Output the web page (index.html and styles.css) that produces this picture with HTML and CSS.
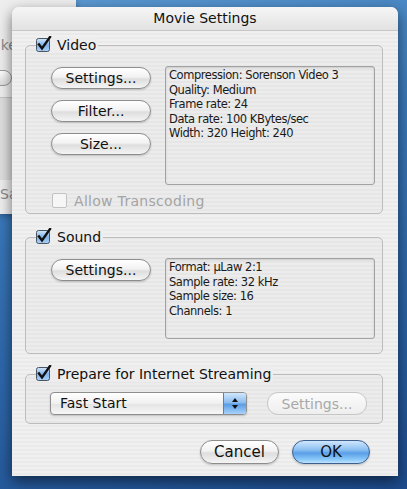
FILE: index.html
```html
<!DOCTYPE html>
<html lang="en">
<head>
  <meta charset="UTF-8" />
  <title>Movie Settings</title>
  <link rel="stylesheet" href="styles.css">
</head>
<body>
  <div class="desktop">

    <!-- window behind the sheet -->
    <div class="back-window">
      <div class="back-text back-make">Make</div>
      <div class="back-btn"></div>
      <div class="back-panel"></div>
      <div class="back-text back-save">Save</div>
    </div>

    <!-- Movie Settings dialog -->
    <div class="dialog">
      <div class="titlebar">Movie Settings</div>

      <div class="dialog-body">

        <div class="group group-video">
          <div class="group-title">
            <svg class="check" width="16" height="16" viewBox="0 0 16 16">
              <defs>
                <linearGradient id="cb1" x1="0" y1="0" x2="0" y2="1">
                  <stop offset="0" stop-color="#d4e8fb"/>
                  <stop offset="0.5" stop-color="#7fb3ea"/>
                  <stop offset="1" stop-color="#a9d0f6"/>
                </linearGradient>
              </defs>
              <rect x="0.5" y="2.5" width="13" height="13" rx="2" fill="url(#cb1)" stroke="#4a5563"/>
              <path d="M3 8.5 L6 12.5 L14 1" fill="none" stroke="#111" stroke-width="2.4" stroke-linecap="square"/>
            </svg>
            <span>Video</span>
          </div>
          <div class="group-row">
            <div class="btn-col">
              <button class="aqua-btn">Settings...</button>
              <button class="aqua-btn">Filter...</button>
              <button class="aqua-btn">Size...</button>
            </div>
            <div class="info info-video">
              <div>Compression: Sorenson Video 3</div>
              <div>Quality: Medium</div>
              <div>Frame rate: 24</div>
              <div>Data rate: 100 KBytes/sec</div>
              <div>Width: 320 Height: 240</div>
            </div>
          </div>
          <div class="check-row is-disabled">
            <span class="empty-box"></span>
            <span>Allow Transcoding</span>
          </div>
        </div>

        <div class="group group-sound">
          <div class="group-title">
            <svg class="check" width="16" height="16" viewBox="0 0 16 16">
              <rect x="0.5" y="2.5" width="13" height="13" rx="2" fill="url(#cb1)" stroke="#4a5563"/>
              <path d="M3 8.5 L6 12.5 L14 1" fill="none" stroke="#111" stroke-width="2.4" stroke-linecap="square"/>
            </svg>
            <span>Sound</span>
          </div>
          <div class="group-row">
            <div class="btn-col">
              <button class="aqua-btn">Settings...</button>
            </div>
            <div class="info info-sound">
              <div>Format: µLaw 2:1</div>
              <div>Sample rate: 32 kHz</div>
              <div>Sample size: 16</div>
              <div>Channels: 1</div>
            </div>
          </div>
        </div>

        <div class="group group-stream">
          <div class="group-title">
            <svg class="check" width="16" height="16" viewBox="0 0 16 16">
              <rect x="0.5" y="2.5" width="13" height="13" rx="2" fill="url(#cb1)" stroke="#4a5563"/>
              <path d="M3 8.5 L6 12.5 L14 1" fill="none" stroke="#111" stroke-width="2.4" stroke-linecap="square"/>
            </svg>
            <span>Prepare for Internet Streaming</span>
          </div>
          <div class="stream-row">
            <div class="popup">
              <span class="popup-label">Fast Start</span>
              <span class="popup-arrows">
                <svg width="8" height="13" viewBox="0 0 8 13">
                  <path d="M4 1 L7 5 L1 5 Z" fill="#111"/>
                  <path d="M4 12 L7 8 L1 8 Z" fill="#111"/>
                </svg>
              </span>
            </div>
            <button class="aqua-btn btn-disabled">Settings...</button>
          </div>
        </div>

        <div class="footer">
          <button class="aqua-btn btn-cancel">Cancel</button>
          <button class="aqua-btn btn-ok">OK</button>
        </div>

      </div>
    </div>

  </div>
</body>
</html>
```

FILE: styles.css
```css
body {
  margin: 0;
  padding: 0;
  font-family: 'DejaVu Sans', sans-serif;
  overflow: hidden;
}

.desktop {
  position: relative;
  width: 407px;
  height: 489px;
  overflow: hidden;
  background: linear-gradient(165deg, #5d9bd2 0%, #3a78b9 35%, #2a62a4 70%, #1d4b8c 100%);
}

/* Window behind the sheet */
.back-window {
  position: absolute;
  left: 0;
  top: 0;
  width: 76px;
  height: 214px;
  background: #eeeeee;
  display: flex;
  flex-direction: column;
  box-shadow: 0 2px 6px rgba(0,0,0,0.3);
}

.back-text {
  font-size: 14px;
  color: #8a8a8a;
}

.back-make {
  margin-top: 37px;
  margin-left: -20px;
}

.back-btn {
  margin-top: 17px;
  margin-left: -30px;
  width: 40px;
  height: 14px;
  border: 1px solid #9a9a9a;
  border-radius: 8px;
  background: linear-gradient(#ffffff, #dcdcdc);
}

.back-panel {
  margin-top: 11px;
  height: 82px;
  background: #dedede;
  border-top: 1px solid #c4c4c4;
}

.back-save {
  margin-top: 6px;
}

/* Dialog */
.dialog {
  position: absolute;
  left: 12px;
  top: 7px;
  width: 386px;
  height: 469px;
  border-radius: 7px 7px 0 0;
  background: repeating-linear-gradient(#f0f0f0 0, #f0f0f0 2px, #eaeaea 2px, #eaeaea 4px);
  box-shadow: 0 5px 14px rgba(0,0,0,0.55);
  overflow: hidden;
}

.titlebar {
  height: 23px;
  line-height: 23px;
  text-align: center;
  font-size: 14px;
  color: #111;
  background: linear-gradient(#f6f6f6, #e2e2e2);
  border-bottom: 1px solid #c6c6c6;
  border-radius: 7px 7px 0 0;
}

.dialog-body {
  padding: 14px 15px 0 13px;
  display: flex;
  flex-direction: column;
}

/* Group boxes */
.group {
  position: relative;
  border: 1px solid #bcbcbc;
  border-radius: 5px;
  background: rgba(0,0,0,0.015);
}

.group-title {
  position: absolute;
  left: 10px;
  top: -9px;
  display: flex;
  align-items: center;
  gap: 5px;
  padding-right: 2px;
  background: #ededed;
  font-size: 14px;
  color: #111;
  line-height: 16px;
}

.check {
  display: block;
  margin-top: -3px;
}

.group-video {
  padding: 20px 7px 5px 25px;
}

.group-sound {
  margin-top: 23px;
  padding: 20px 7px 14px 25px;
}

.group-stream {
  margin-top: 20px;
  padding: 17px 15px 8px 24px;
}

.group-row {
  display: flex;
  gap: 14px;
}

.btn-col {
  display: flex;
  flex-direction: column;
  gap: 11px;
  padding-top: 1px;
}

/* Aqua push buttons */
.aqua-btn {
  width: 100px;
  height: 22px;
  padding: 0;
  border: 1px solid #8d8d8d;
  border-radius: 11px;
  background: linear-gradient(#ffffff 0%, #f2f2f2 45%, #dedede 55%, #f4f4f4 100%);
  font-family: 'DejaVu Sans', sans-serif;
  font-size: 14px;
  color: #111;
  box-shadow: 0 1px 2px rgba(0,0,0,0.2);
}

.btn-disabled {
  height: 23px;
  border-color: #c6c6c6;
  color: #a9a9a9;
  background: linear-gradient(#fbfbfb, #eeeeee);
  box-shadow: none;
}

/* Info boxes */
.info {
  flex: 1;
  border: 1px solid #a2a2a2;
  border-radius: 3px;
  padding: 1px 3px;
  font-size: 11.5px;
  letter-spacing: -0.45px;
  line-height: 14.6px;
  color: #1a1a1a;
  box-shadow: inset 0 1px 2px rgba(0,0,0,0.15);
}

.info-video {
  height: 115px;
}

.info-sound {
  height: 77px;
}

/* Allow Transcoding */
.check-row {
  margin-top: 8px;
  display: flex;
  align-items: center;
  gap: 7px;
  font-size: 14px;
  letter-spacing: 0.3px;
  height: 15px;
}

.is-disabled {
  color: #a4a4a4;
}

.empty-box {
  width: 13px;
  height: 13px;
  margin-left: 1px;
  border: 1px solid #c2c2c2;
  border-radius: 2px;
  background: #f6f6f6;
}

/* Streaming row */
.stream-row {
  display: flex;
  gap: 20px;
  align-items: center;
}

.popup {
  width: 195px;
  height: 21px;
  display: flex;
  border: 1px solid #8e8e8e;
  border-radius: 4px;
  overflow: hidden;
  background: linear-gradient(#ffffff, #f0f0f0 50%, #e4e4e4 51%, #f6f6f6);
  box-shadow: 0 1px 2px rgba(0,0,0,0.2);
}

.popup-label {
  flex: 1;
  padding-left: 9px;
  font-size: 14px;
  line-height: 21px;
  color: #111;
}

.popup-arrows {
  width: 22px;
  display: flex;
  align-items: center;
  justify-content: center;
  border-left: 1px solid #5b7fae;
  background: linear-gradient(#d2e7fc 0%, #8dbdf0 45%, #5c9de6 55%, #a9d3fb 100%);
}

/* Footer */
.footer {
  margin-top: 16px;
  display: flex;
  justify-content: flex-end;
  gap: 13px;
  padding-right: 13px;
}

.btn-cancel,
.btn-ok {
  width: 79px;
  height: 24px;
  border-radius: 12px;
  font-size: 15px;
}

.btn-ok {
  width: 78px;
  border-color: #3c5f8e;
  background: linear-gradient(#cfe6fd 0%, #8cc0f2 40%, #5a9fe8 55%, #8ccaf9 85%, #bfe3fe 100%);
}
```
